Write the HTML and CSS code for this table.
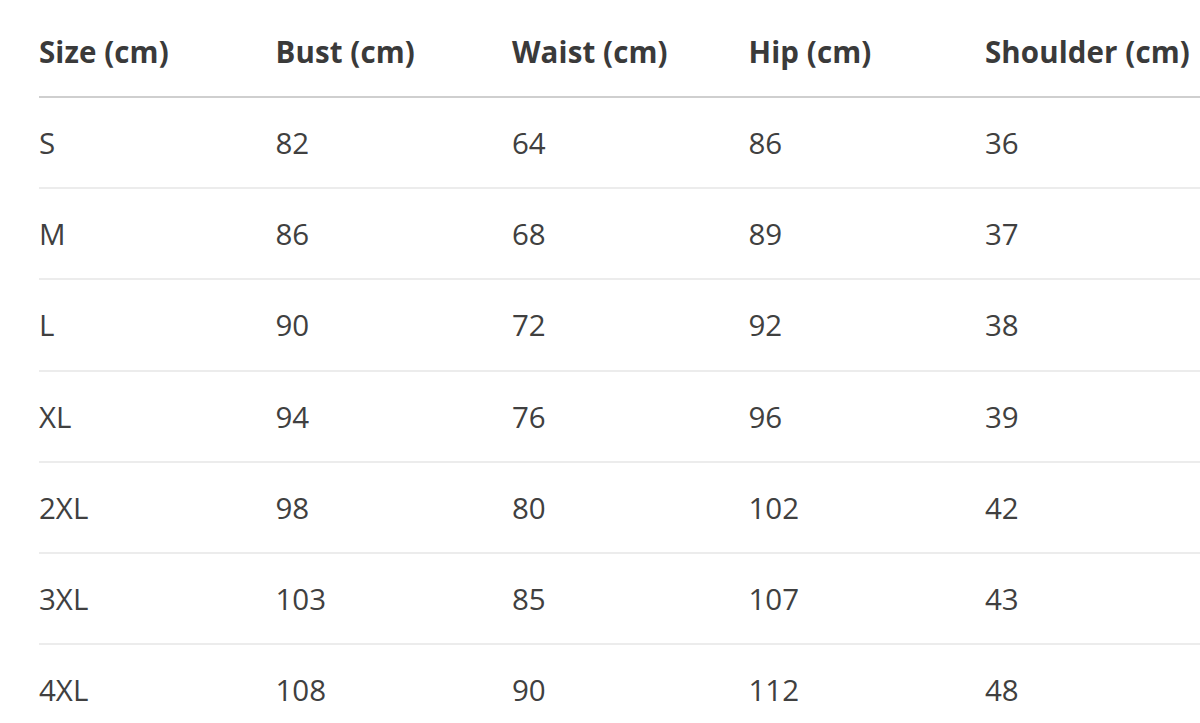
FILE: index.html
```html
<!DOCTYPE html>
<html lang="en">
<head>
<meta charset="utf-8">
<title>Size Chart</title>
<link rel="stylesheet" href="styles.css">
</head>
<body>
<div class="wrap">
<table class="size-table">
  <colgroup>
    <col class="col"><col class="col"><col class="col"><col class="col"><col class="col-last">
  </colgroup>
  <thead>
    <tr><th>Size (cm)</th><th>Bust (cm)</th><th>Waist (cm)</th><th>Hip (cm)</th><th>Shoulder (cm)</th></tr>
  </thead>
  <tbody>
    <tr><td>S</td><td>82</td><td>64</td><td>86</td><td>36</td></tr>
    <tr><td>M</td><td>86</td><td>68</td><td>89</td><td>37</td></tr>
    <tr><td>L</td><td>90</td><td>72</td><td>92</td><td>38</td></tr>
    <tr><td>XL</td><td>94</td><td>76</td><td>96</td><td>39</td></tr>
    <tr><td>2XL</td><td>98</td><td>80</td><td>102</td><td>42</td></tr>
    <tr><td>3XL</td><td>103</td><td>85</td><td>107</td><td>43</td></tr>
    <tr><td>4XL</td><td>108</td><td>90</td><td>112</td><td>48</td></tr>
  </tbody>
</table>
</div>
</body>
</html>
```
FILE: styles.css
```css
html, body {
  margin: 0;
  padding: 0;
  background: #ffffff;
  overflow: hidden;
}
.wrap {
  padding: 6px 0 0 39px;
}
.size-table {
  border-collapse: collapse;
  table-layout: fixed;
  width: 1161px;
  font-family: "Open Sans", "Noto Sans", sans-serif;
  color: #3a3a3a;
}
.col {
  width: 236.5px;
}
.col-last {
  width: 215px;
}
.size-table th,
.size-table td {
  text-align: left;
  padding: 0;
  white-space: nowrap;
  vertical-align: middle;
}
.size-table th {
  font-weight: 700;
  font-size: 29.5px;
  letter-spacing: 0.1px;
  height: 90px;
  border-bottom: 2px solid #cfcfcf;
  color: #3a3a3a;
}
.size-table td {
  font-weight: 400;
  font-size: 29.5px;
  height: 89.2px;
  border-bottom: 2px solid #ececec;
  color: #404040;
}
.size-table tbody tr:last-child td {
  border-bottom: none;
}
```
